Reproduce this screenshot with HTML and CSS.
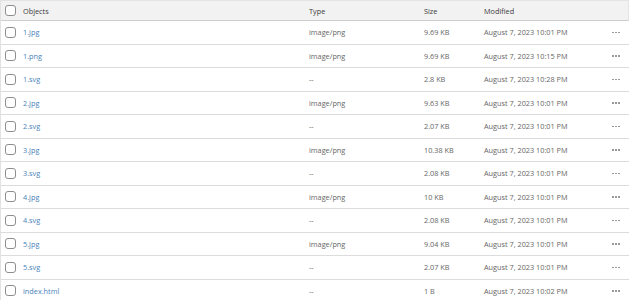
FILE: index.html
```html
<!DOCTYPE html>
<html lang="en">
<head>
  <meta charset="UTF-8" />
  <title>Objects</title>
  <link rel="stylesheet" href="styles.css">
</head>
<body>
  <div class="objects">
    <div class="row head">
      <span class="check"></span>
      <span>Objects</span>
      <span>Type</span>
      <span>Size</span>
      <span>Modified</span>
      <span></span>
    </div>
    <div class="row"><span class="check"></span><a href="#">1.jpg</a><span>image/png</span><span>9.69 KB</span><span>August 7, 2023 10:01 PM</span><span class="more"><i></i><i></i><i></i></span></div>
    <div class="row"><span class="check"></span><a href="#">1.png</a><span>image/png</span><span>9.69 KB</span><span>August 7, 2023 10:15 PM</span><span class="more"><i></i><i></i><i></i></span></div>
    <div class="row"><span class="check"></span><a href="#">1.svg</a><span>--</span><span>2.8 KB</span><span>August 7, 2023 10:28 PM</span><span class="more"><i></i><i></i><i></i></span></div>
    <div class="row"><span class="check"></span><a href="#">2.jpg</a><span>image/png</span><span>9.63 KB</span><span>August 7, 2023 10:01 PM</span><span class="more"><i></i><i></i><i></i></span></div>
    <div class="row"><span class="check"></span><a href="#">2.svg</a><span>--</span><span>2.07 KB</span><span>August 7, 2023 10:01 PM</span><span class="more"><i></i><i></i><i></i></span></div>
    <div class="row"><span class="check"></span><a href="#">3.jpg</a><span>image/png</span><span>10.38 KB</span><span>August 7, 2023 10:01 PM</span><span class="more"><i></i><i></i><i></i></span></div>
    <div class="row"><span class="check"></span><a href="#">3.svg</a><span>--</span><span>2.08 KB</span><span>August 7, 2023 10:01 PM</span><span class="more"><i></i><i></i><i></i></span></div>
    <div class="row"><span class="check"></span><a href="#">4.jpg</a><span>image/png</span><span>10 KB</span><span>August 7, 2023 10:01 PM</span><span class="more"><i></i><i></i><i></i></span></div>
    <div class="row"><span class="check"></span><a href="#">4.svg</a><span>--</span><span>2.08 KB</span><span>August 7, 2023 10:01 PM</span><span class="more"><i></i><i></i><i></i></span></div>
    <div class="row"><span class="check"></span><a href="#">5.jpg</a><span>image/png</span><span>9.04 KB</span><span>August 7, 2023 10:01 PM</span><span class="more"><i></i><i></i><i></i></span></div>
    <div class="row"><span class="check"></span><a href="#">5.svg</a><span>--</span><span>2.07 KB</span><span>August 7, 2023 10:01 PM</span><span class="more"><i></i><i></i><i></i></span></div>
    <div class="row"><span class="check"></span><a href="#">index.html</a><span>--</span><span>1 B</span><span>August 7, 2023 10:02 PM</span><span class="more"><i></i><i></i><i></i></span></div>
  </div>
</body>
</html>
```

FILE: styles.css
```css
body {
  margin: 0;
  background: #fff;
  font-family: "Open Sans", "Noto Sans", sans-serif;
  font-size: 7.3px;
  color: #666;
}
.objects {
  width: 628px;
  border-left: 1px solid #e2e2e2;
}
.row {
  display: grid;
  grid-template-columns: 22px 286px 115px 60px 1fr 28px;
  align-items: center;
  height: 23.5px;
  box-sizing: border-box;
  border-bottom: 1px solid #dcdcdc;
}
.row.head {
  height: 21px;
  background: #f2f2f2;
  border-top: 1px solid #e4e4e4;
  border-right: 1px solid #e4e4e4;
  border-bottom: 1px solid #cdcdcd;
  color: #3c3c3c;
}
.check {
  width: 9px;
  height: 9px;
  margin-left: 4px;
  border: 1px solid #8e8e8e;
  border-radius: 3px;
  background: #fff;
}
.row a {
  color: #4a7fb8;
  text-decoration: none;
}
.more {
  display: flex;
  gap: 1.5px;
  margin-left: 11px;
}
.more i {
  width: 1.5px;
  height: 1.5px;
  background: #9a9a9a;
}
```
